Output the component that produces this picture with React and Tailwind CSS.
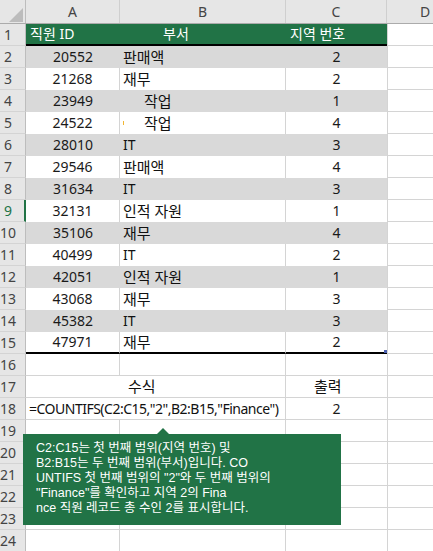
import React from 'react';

const GRID = 'grid grid-cols-[26px_94px_166px_101px_1fr] h-[22px]';

const employees = [
  { id: '20552', dept: '판매액', region: '2' },
  { id: '21268', dept: '재무', region: '2' },
  { id: '23949', dept: '작업', region: '1', indent: true },
  { id: '24522', dept: '작업', region: '4', indent: true, mark: true },
  { id: '28010', dept: 'IT', region: '3' },
  { id: '29546', dept: '판매액', region: '4' },
  { id: '31634', dept: 'IT', region: '3' },
  { id: '32131', dept: '인적 자원', region: '1' },
  { id: '35106', dept: '재무', region: '4' },
  { id: '40499', dept: 'IT', region: '2' },
  { id: '42051', dept: '인적 자원', region: '1' },
  { id: '43068', dept: '재무', region: '3' },
  { id: '45382', dept: 'IT', region: '3' },
  { id: '47971', dept: '재무', region: '2' },
];

// row header cell on the left
const RowHead = ({ n, active }) => (
  <div
    className={`flex items-center h-full bg-[#e6e6e6] border-b border-[#d4d4d4] ${
      active ? 'border-r-2 border-r-[#217346] text-[#217346]' : 'border-r border-r-[#bdbdbd] text-[#444]'
    }`}
  >
    <span className="w-[16px] text-center text-[14px]">{n}</span>
  </div>
);

const ColD = ({ border = true }) => (
  <div className={`h-full border-l border-[#d4d4d4] ${border ? 'border-b' : ''} bg-white`} />
);

const TableRow = ({ n, emp, striped, last, active }) => {
  const bg = striped ? 'bg-[#d9d9d9]' : 'bg-white';
  const divider = striped ? '' : 'border-r border-r-[#d4d4d4]';
  const bottom = last ? 'border-b-2 border-b-black' : '';
  return (
    <div className={GRID}>
      <RowHead n={n} active={active} />
      <div className={`flex items-center justify-center h-full text-[14px] text-[#1a1a1a] ${bg} ${divider} ${bottom}`}>
        {emp.id}
      </div>
      <div className={`flex items-center h-full text-[#111] ${bg} ${divider} ${bottom} ${emp.indent ? 'pl-[24px]' : 'pl-[3px]'}`}>
        {emp.mark && <span className="w-[1px] h-[4px] bg-[#f2b632] -ml-[21px] mr-[20px]" />}
        <span className={emp.dept === 'IT' ? 'text-[14px]' : 'text-[15px]'}>{emp.dept}</span>
      </div>
      <div className={`flex items-center justify-center h-full text-[14px] text-[#1a1a1a] ${bg} ${bottom}`}>
        {emp.region}
      </div>
      <ColD />
    </div>
  );
};

const EmptyRow = ({ n }) => (
  <div className={GRID}>
    <RowHead n={n} />
    <div className="h-full border-r border-b border-[#d4d4d4]" />
    <div className="h-full border-r border-b border-[#d4d4d4]" />
    <div className="h-full border-b border-[#d4d4d4]" />
    <ColD />
  </div>
);

export default function App() {
  return (
    <div className="relative w-[433px] h-[551px] overflow-hidden bg-white font-['Noto_Sans','Noto_Sans_CJK_KR',sans-serif] leading-none">
      {/* column headers */}
      <div className="grid grid-cols-[26px_94px_166px_101px_1fr] h-[24px] bg-[#e6e6e6] border-b border-[#ababab] text-[14px] text-[#444]">
        <div className="relative h-full border-r border-[#bdbdbd]">
          <svg className="absolute left-[9px] top-[8px]" width="14" height="14" viewBox="0 0 14 14">
            <polygon points="14,0 14,14 0,14" fill="#bcbcbc" />
          </svg>
        </div>
        <div className="flex items-center justify-center border-r border-[#cfcfcf]">A</div>
        <div className="flex items-center justify-center border-r border-[#cfcfcf]">B</div>
        <div className="flex items-center justify-center border-r border-[#cfcfcf]">C</div>
        <div className="flex items-center pl-[33px]">D</div>
      </div>

      {/* row 1: table header */}
      <div className={GRID}>
        <RowHead n="1" />
        <div className="flex items-center h-full pl-[4px] bg-[#217346] text-white text-[14px] border-b-2 border-b-black">직원 ID</div>
        <div className="flex items-center h-full pl-[43px] bg-[#217346] text-white text-[14px] border-b-2 border-b-black">부서</div>
        <div className="flex items-center h-full pl-[4px] bg-[#217346] text-white text-[14px] border-b-2 border-b-black">지역 번호</div>
        <ColD />
      </div>

      {employees.map((emp, i) => (
        <TableRow
          key={emp.id}
          n={i + 2}
          emp={emp}
          striped={i % 2 === 0}
          last={i === employees.length - 1}
          active={i + 2 === 9}
        />
      ))}

      <EmptyRow n="16" />

      {/* row 17: labels */}
      <div className={GRID}>
        <RowHead n="17" />
        <div className="col-span-2 flex items-center h-full pl-[102px] text-[15px] text-[#111] border-r border-b border-[#d4d4d4]">수식</div>
        <div className="flex items-center h-full pl-[28px] text-[15px] text-[#111] border-b border-[#d4d4d4]">출력</div>
        <ColD />
      </div>

      {/* row 18: formula */}
      <div className={GRID}>
        <RowHead n="18" />
        <div className="relative z-10 flex items-center h-full pl-[3px] text-[14px] text-[#111] tracking-[-0.5px] whitespace-nowrap border-b border-[#d4d4d4]">
          =COUNTIFS(C2:C15,"2",B2:B15,"Finance")
        </div>
        <div className="h-full border-r border-b border-[#d4d4d4]" />
        <div className="flex items-center justify-center h-full text-[14px] text-[#1a1a1a] border-b border-[#d4d4d4]">2</div>
        <ColD />
      </div>

      {['19', '20', '21', '22', '23', '24'].map((n) => (
        <EmptyRow key={n} n={n} />
      ))}

      {/* table resize handle */}
      <div className="absolute left-[384px] top-[350px] w-[3px] h-[3px] bg-[#4a5fb0]" />

      {/* callout */}
      <div className="absolute left-[23px] top-[434px] w-[318px] h-[91px] bg-[#217346] text-white text-[12.5px] leading-[15px] pl-[13px] pt-[7px] z-20 font-['Liberation_Sans','Noto_Sans_CJK_KR',sans-serif]">
        <div className="absolute -top-[6px] left-[134px] w-0 h-0 border-l-[6px] border-r-[6px] border-b-[6px] border-x-transparent border-b-[#217346]" />
        <div className="whitespace-nowrap">C2:C15는 첫 번째 범위(지역 번호) 및</div>
        <div className="whitespace-nowrap">B2:B15는 두 번째 범위(부서)입니다. CO</div>
        <div className="whitespace-nowrap">UNTIFS 첫 번째 범위의 "2"와 두 번째 범위의</div>
        <div className="whitespace-nowrap">"Finance"를 확인하고 지역 2의 Fina</div>
        <div className="whitespace-nowrap">nce 직원 레코드 총 수인 2를 표시합니다.</div>
      </div>
    </div>
  );
}
